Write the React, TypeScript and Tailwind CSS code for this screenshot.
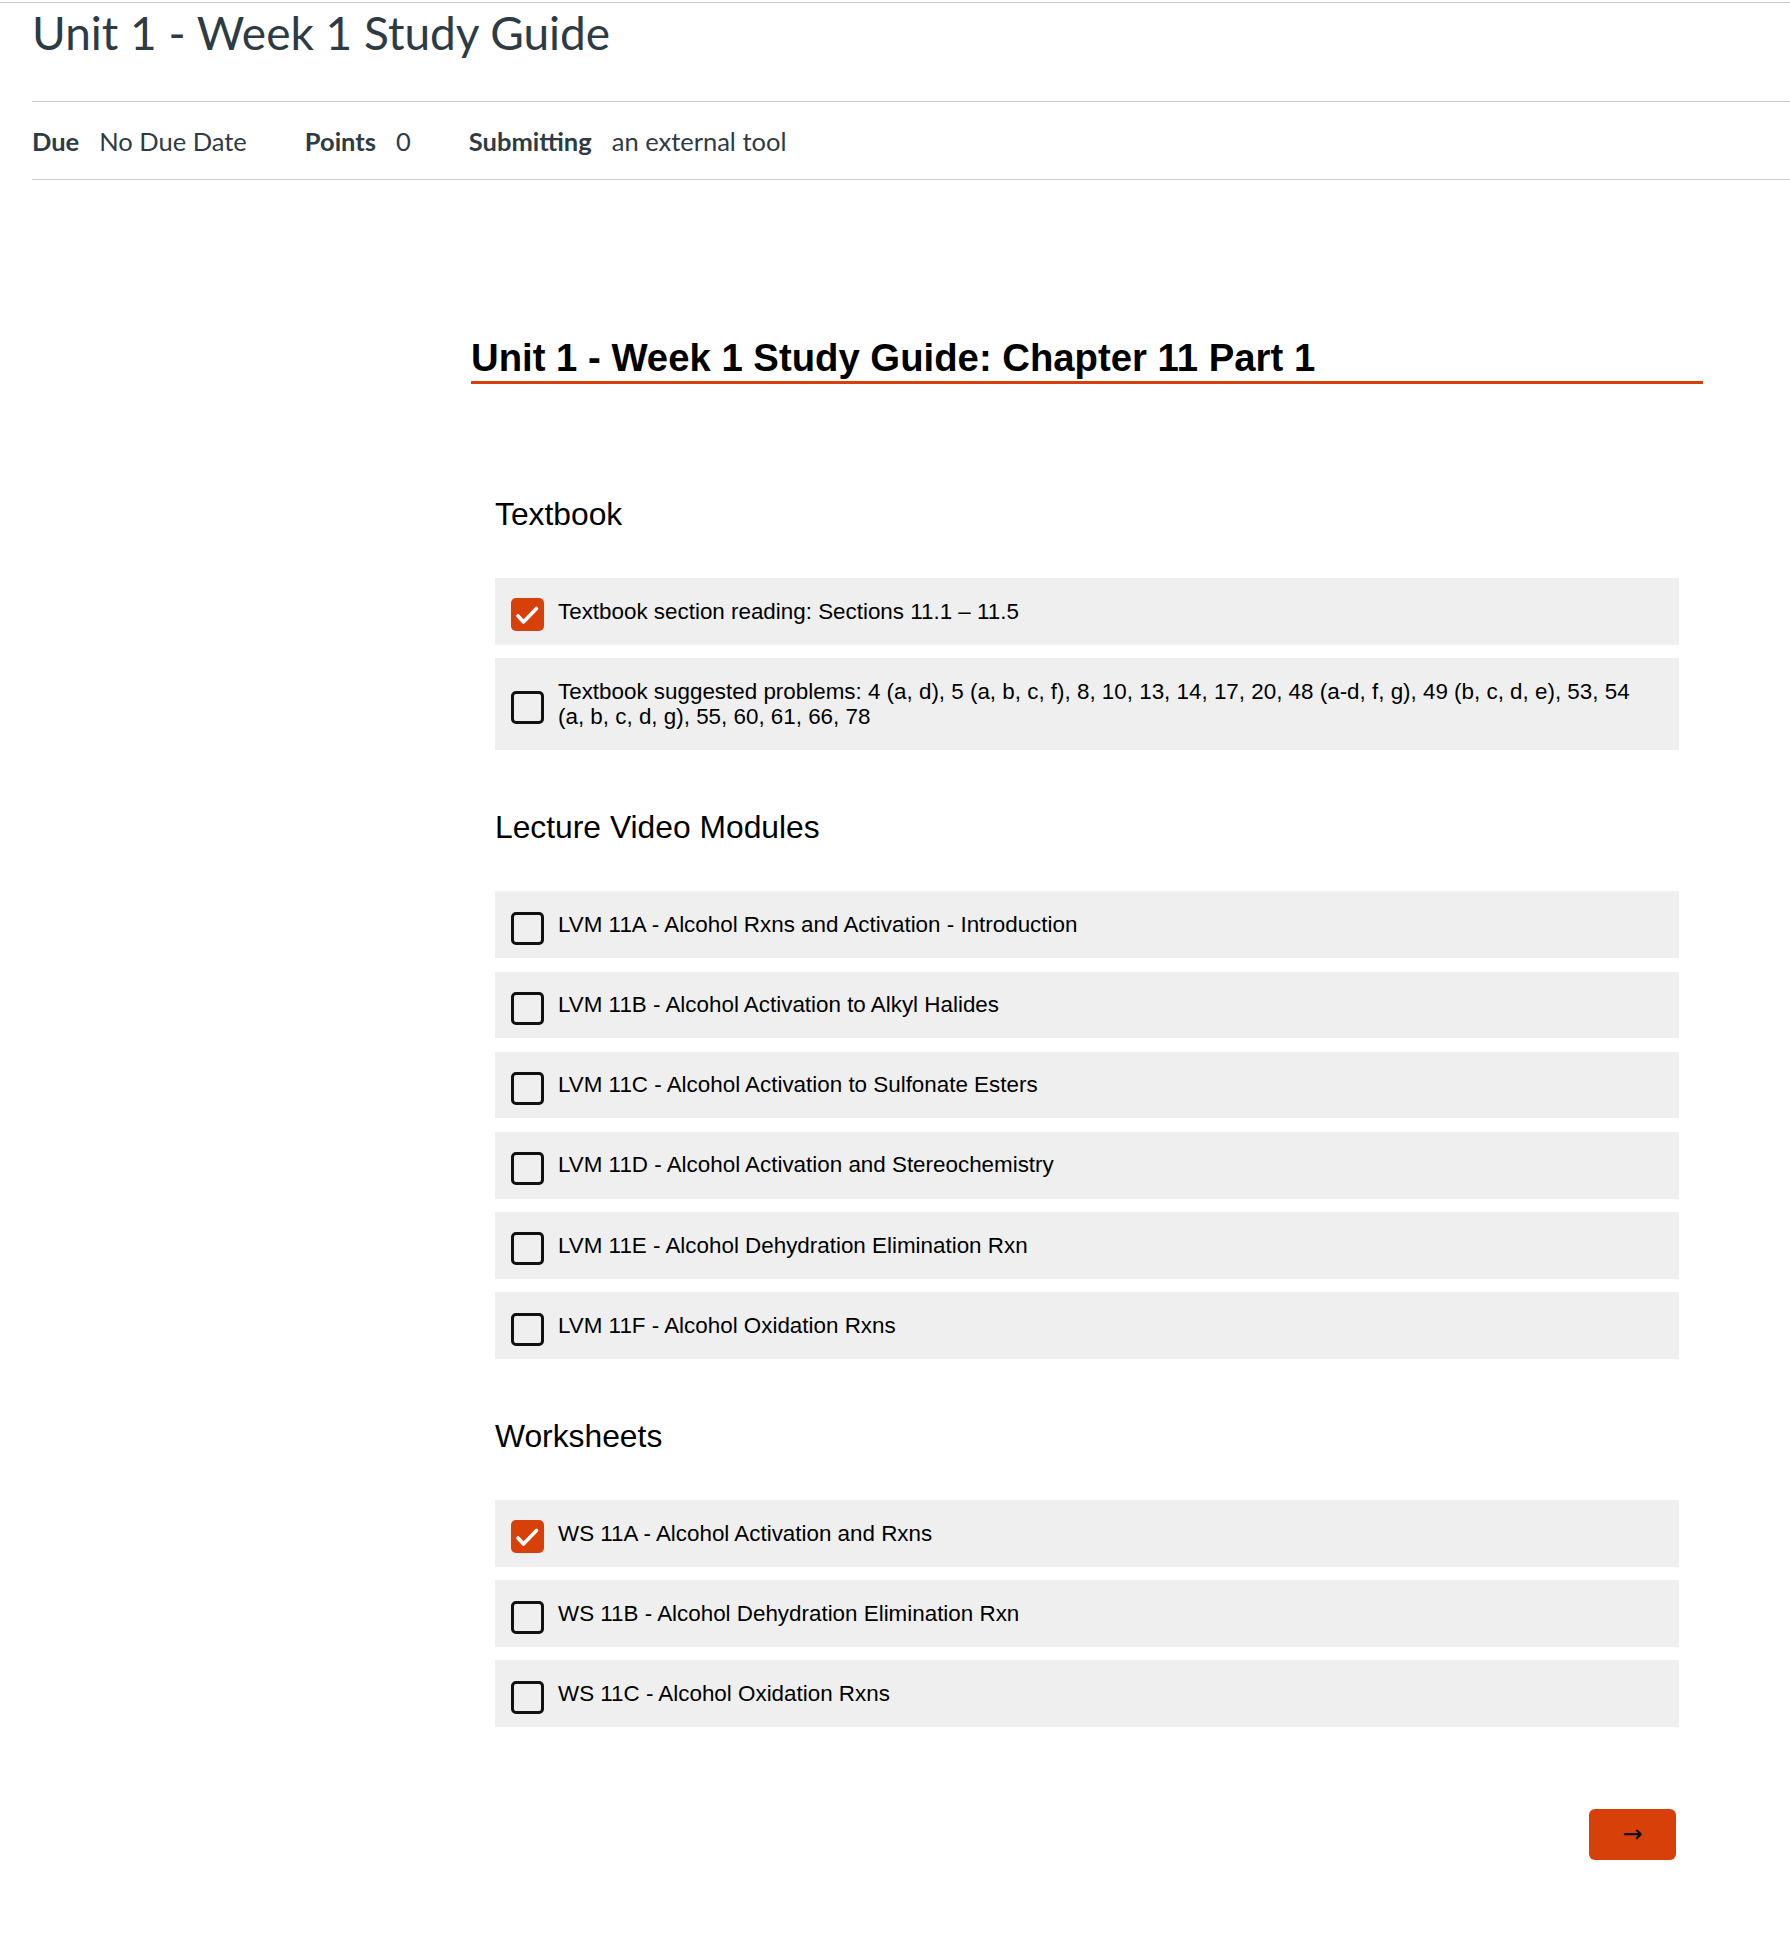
import { useState } from "react";

type Item = { label: string; done: boolean };

const sections: { title: string; items: Item[] }[] = [
  {
    title: "Textbook",
    items: [
      { label: "Textbook section reading: Sections 11.1 – 11.5", done: true },
      {
        label:
          "Textbook suggested problems: 4 (a, d), 5 (a, b, c, f), 8, 10, 13, 14, 17, 20, 48 (a-d, f, g), 49 (b, c, d, e), 53, 54 (a, b, c, d, g), 55, 60, 61, 66, 78",
        done: false,
      },
    ],
  },
  {
    title: "Lecture Video Modules",
    items: [
      { label: "LVM 11A - Alcohol Rxns and Activation - Introduction", done: false },
      { label: "LVM 11B - Alcohol Activation to Alkyl Halides", done: false },
      { label: "LVM 11C - Alcohol Activation to Sulfonate Esters", done: false },
      { label: "LVM 11D - Alcohol Activation and Stereochemistry", done: false },
      { label: "LVM 11E - Alcohol Dehydration Elimination Rxn", done: false },
      { label: "LVM 11F - Alcohol Oxidation Rxns", done: false },
    ],
  },
  {
    title: "Worksheets",
    items: [
      { label: "WS 11A - Alcohol Activation and Rxns", done: true },
      { label: "WS 11B - Alcohol Dehydration Elimination Rxn", done: false },
      { label: "WS 11C - Alcohol Oxidation Rxns", done: false },
    ],
  },
];

function CheckRow({ item }: { item: Item }) {
  const [done, setDone] = useState(item.done);
  return (
    <div className="flex items-center bg-[#efefef] py-[20.4px] pl-[16px] pr-[30px]">
      <button
        onClick={() => setDone(!done)}
        className={
          done
            ? "-mb-[7px] flex h-[33px] w-[33px] shrink-0 items-center justify-center self-center rounded-[5px] bg-[#d74009]"
            : "-mb-[7px] h-[33px] w-[33px] shrink-0 self-center rounded-[5px] border-[3px] border-[#111]"
        }
      >
        {done && (
          <svg width="33" height="33" viewBox="0 0 33 33" fill="none">
            <path d="M7 18l5.5 6L25.5 10.5" stroke="#fff" strokeWidth="3.6" strokeLinecap="round" strokeLinejoin="round" />
          </svg>
        )}
      </button>
      <span className="ml-[14px] text-[22.4px] leading-[25.7px] text-black">{item.label}</span>
    </div>
  );
}

export default function App() {
  return (
    <div className="min-h-screen bg-white pt-[2px] font-['Liberation_Sans',Arial,sans-serif]">
      <div className="border-t border-[#c7cdd1]" />
      <div className="pl-[32px] font-['Lato',sans-serif] text-[#2d3b45]">
        <h1 className="mt-[3px] text-[46px] leading-[54px]">Unit 1 - Week 1 Study Guide</h1>
        <div className="mt-[41px] flex border-y border-[#c7cdd1] pt-[24px] pb-[23px] text-[25.5px] leading-[30px]">
          <div className="mr-[58px]">
            <span className="font-bold">Due</span>
            <span className="ml-[20px]">No Due Date</span>
          </div>
          <div className="mr-[58px]">
            <span className="font-bold">Points</span>
            <span className="ml-[20px]">0</span>
          </div>
          <div>
            <span className="font-bold">Submitting</span>
            <span className="ml-[20px]">an external tool</span>
          </div>
        </div>
      </div>

      <div className="ml-[471px] mt-[156px] w-[1232px]">
        <h2 className="border-b-[3px] border-[#d74009] pb-[1px] text-[38.3px] font-bold leading-[44px] text-black">
          Unit 1 - Week 1 Study Guide: Chapter 11 Part 1
        </h2>
        <div className="mt-[112px] px-[24px]">
          {sections.map((s, i) => (
            <section key={s.title} className={i === 0 ? "" : "mt-[59px]"}>
              <h3 className="mb-[46px] text-[31.8px] leading-[36px] text-black">{s.title}</h3>
              <div className="flex flex-col gap-[13.4px]">
                {s.items.map((it) => (
                  <CheckRow key={it.label} item={it} />
                ))}
              </div>
            </section>
          ))}
          <div className="mt-[81.5px] flex justify-end pr-[3px]">
            <button className="flex h-[51px] w-[87px] items-center justify-center rounded-[6px] bg-[#d74009] font-['DejaVu_Sans',sans-serif] text-[24px] leading-none text-black">
              →
            </button>
          </div>
        </div>
      </div>
    </div>
  );
}
